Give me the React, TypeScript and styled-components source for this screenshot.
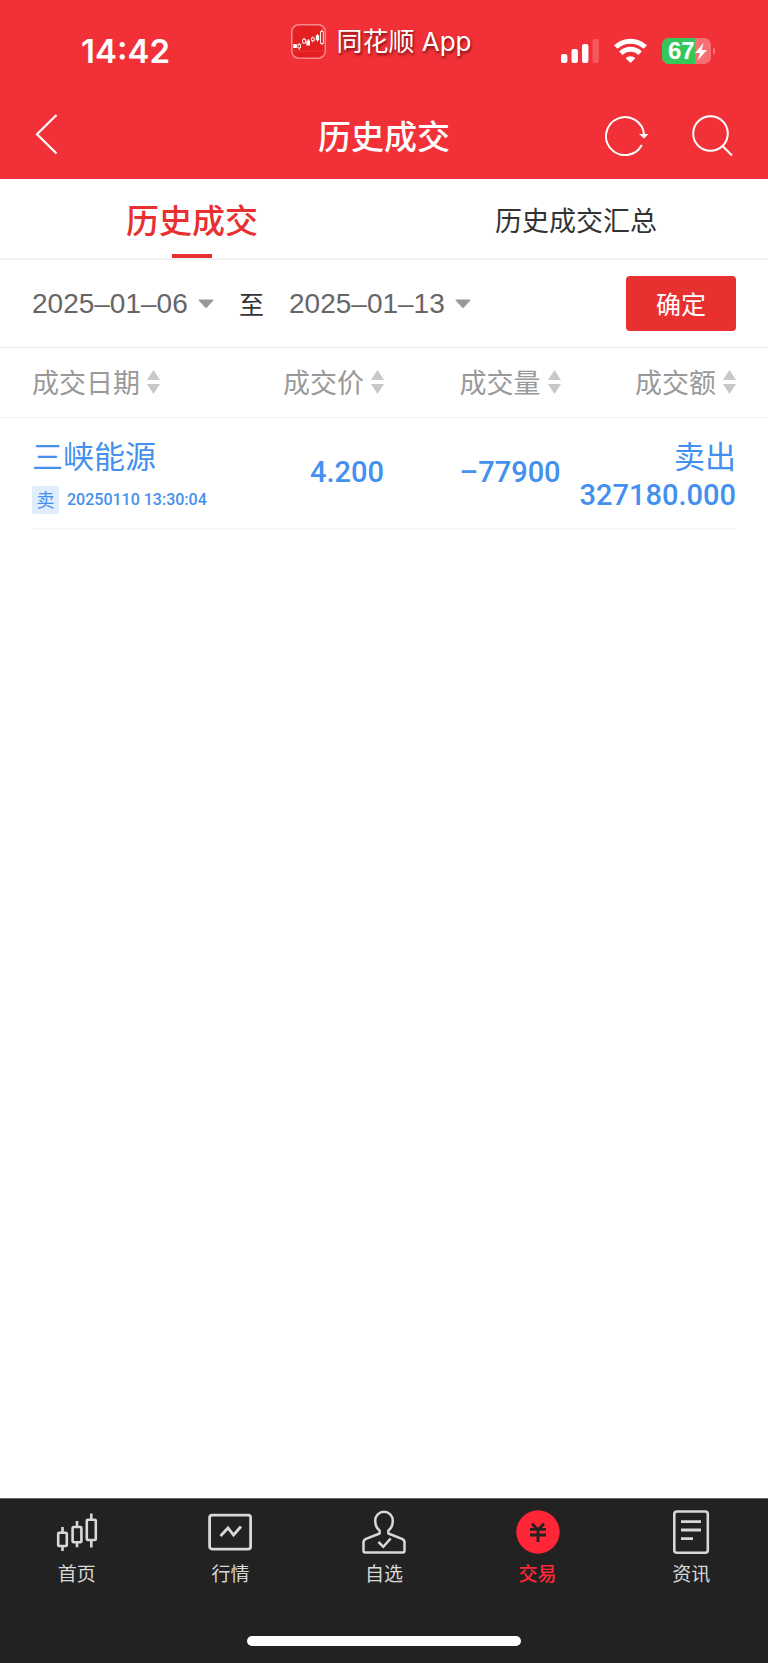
import React, { useState } from 'react';
import styled, { createGlobalStyle, css } from 'styled-components';

const cjk = `'Noto Sans CJK SC', sans-serif`;

const GlobalStyle = createGlobalStyle`
  *, *::before, *::after { box-sizing: border-box; }
  body { margin: 0; background: #fff; color: #333; font-family: ${cjk}; }
  button, select { font: inherit; color: inherit; background: none; border: 0; padding: 0; margin: 0; }
  button { cursor: pointer; }
  svg { display: block; flex: none; }
`;

const Page = styled.div`
  min-height: 100vh;
  display: flex;
  flex-direction: column;
`;

const Header = styled.header`
  background: #f23037;
  color: #fff;
`;

const StatusBar = styled.div`
  display: grid;
  grid-template-columns: 1fr auto 1fr;
  padding: 24px 0 25px;
  height: 93px;
`;

const Clock = styled.time`
  align-self: end;
  padding-left: 81px;
  font: 600 33px/34px Inter, sans-serif;
`;

const AppTag = styled.div`
  display: flex;
  align-items: center;
  gap: 10px;
  height: 35px;
  padding-right: 5px;
  font: 400 26px/35px Inter, ${cjk};
  text-shadow: 1px 2px 3px rgba(60, 0, 0, 0.7);
`;

const StatusIcons = styled.div`
  align-self: end;
  display: flex;
  align-items: center;
  justify-content: flex-end;
  height: 34px;
  gap: 15px;
  padding-right: 52px;
`;

const TitleBar = styled.div`
  display: grid;
  grid-template-columns: 1fr auto 1fr;
  align-items: center;
  height: 86px;
  padding: 0 35px;
`;

const Title = styled.h1`
  margin: 0;
  padding-bottom: 2px;
  font-size: 33px;
  line-height: 40px;
  font-weight: 500;
`;

const Actions = styled.div`
  display: flex;
  justify-content: flex-end;
  gap: 43px;
`;

const Tabs = styled.div`
  display: flex;
  height: 81px;
  border-bottom: 2px solid #f2f2f2;
`;

const Tab = styled.button<{ $active: boolean }>`
  flex: 1;
  display: flex;
  flex-direction: column;
  align-items: center;
  justify-content: space-between;
  font-size: 27px;
  line-height: 75px;
  padding-top: 3px;
  &::after {
    content: '';
    width: 40px;
    height: 4px;
    margin-top: -3px;
  }
  ${(p) =>
    p.$active &&
    css`
      font-size: 33px;
      font-weight: 500;
      color: #e93030;
      &::after { background: #e93030; }
    `}
`;

const Filter = styled.form`
  display: flex;
  align-items: center;
  height: 88px;
  padding: 0 32px;
  gap: 25px;
  border-bottom: 1px solid #eee;
  font-size: 25px;
  line-height: 36px;
`;

const DateField = styled.label`
  display: flex;
  align-items: center;
  gap: 10px;
  color: #666;
`;

const DateSelect = styled.select`
  appearance: none;
  font: 400 28px/36px 'Liberation Sans', sans-serif;
`;

const Confirm = styled.button`
  margin-left: auto;
  width: 110px;
  height: 55px;
  padding-bottom: 2px;
  border-radius: 4px;
  background: #e93030;
  color: #fff;
`;

const Until = styled.span`
  padding-bottom: 2px;
`;

const Trades = styled.table`
  width: 100%;
  table-layout: fixed;
  border-collapse: collapse;
  th:first-child, td:first-child { padding-left: 32px; text-align: left; }
  th:last-child, td:last-child { padding-right: 32px; }
`;

const HeadCell = styled.th<{ $width: string }>`
  width: ${(p) => p.$width};
  height: 69px;
  padding: 0;
  border-bottom: 1px solid #f0f0f0;
  text-align: right;
  font-weight: 400;
`;

const SortButton = styled.button`
  display: inline-flex;
  align-items: center;
  gap: 7px;
  font-size: 27px;
  line-height: 36px;
  color: #999;
  white-space: nowrap;
`;

const TradeRow = styled.tr`
  color: #4490ee;
  background: linear-gradient(#f7f7f7, #f7f7f7) no-repeat 32px bottom / calc(100% - 64px) 2px;
`;

const Cell = styled.td`
  padding: 18px 0 14px;
  vertical-align: top;
  text-align: right;
  font-size: 31px;
  line-height: 38px;
`;

const NumberCell = styled(Cell)`
  padding: 16px 0 20px;
  vertical-align: middle;
`;

const Amount = styled.div`
  font: 500 29px/42px Roboto, sans-serif;
`;

const Stamp = styled.div`
  display: flex;
  align-items: center;
  gap: 8px;
  margin-top: 12px;
  white-space: nowrap;
  font: 500 16px/28px Roboto, sans-serif;
`;

const SideBadge = styled.span`
  width: 27px;
  height: 28px;
  border-radius: 2px;
  background: #e0edfc;
  text-align: center;
  font: 400 18px/27px ${cjk};
`;

const Main = styled.main`
  flex: 1;
`;

const Footer = styled.footer`
  display: flex;
  flex-direction: column;
  align-items: center;
  justify-content: space-between;
  height: 165px;
  padding-bottom: 17px;
  background: #222;
  border-top: 1px solid #666;
`;

const NavBar = styled.nav`
  display: flex;
  width: 100%;
`;

const NavLink = styled.a<{ $active?: boolean }>`
  flex: 1;
  display: flex;
  flex-direction: column;
  align-items: center;
  gap: 5px;
  padding-top: 11px;
  font-size: 19px;
  line-height: 28px;
  text-decoration: none;
  color: ${(p) => (p.$active ? '#ff2637' : '#d8d8d8')};
  font-weight: ${(p) => (p.$active ? 500 : 400)};
`;

const HomeIndicator = styled.div`
  width: 274px;
  height: 10px;
  border-radius: 5px;
  background: #fff;
`;

const AppIcon = () => (
  <svg width="35" height="35" viewBox="0 0 35 35" fill="none">
    <rect x="0.8" y="0.8" width="33.4" height="33.4" rx="7" fill="#e31f22" stroke="#f8898b" strokeWidth="1.5" />
    <path d="M2 27h31M2 8h4" stroke="#ee4144" strokeWidth="0.7" />
    <path d="M2.2 20h3.6v4H2.2zM15.4 16.5h3.6v5h-3.6zM24.8 11.3h3.4v5h-3.4z" fill="#fff" />
    <path d="M17.2 15v2M26.5 10v7.5" stroke="#fff" />
    <path d="M6.9 20.5h2.6v3.4H6.9zM8.2 19v1.5M8.2 24v2M11.7 15.4h2.8v3.8h-2.8zM13.1 13.8v1.6M20.4 13.9h2.8v2.8h-2.8zM21.8 12.5v1.4M21.8 16.7v1.6M29.5 7.5h2.8v12h-2.8zM30.9 5.5v2M30.9 19.5v1.6" stroke="#fff" strokeWidth="0.9" />
  </svg>
);

const SignalIcon = () => (
  <svg width="38" height="26" viewBox="0 0 38 26" fill="#fff">
    <rect x="0" y="16" width="6.4" height="9" rx="2" />
    <rect x="10.5" y="11" width="6.4" height="14" rx="2" />
    <rect x="21" y="6" width="6.4" height="19" rx="2" />
    <rect x="31.5" y="1" width="6.4" height="24" rx="2" opacity="0.2" />
  </svg>
);

const WifiIcon = () => (
  <svg width="33" height="26" viewBox="0 0 33 26" fill="none" stroke="#fff" strokeWidth="5">
    <path d="M1.700 9.400A21.600 21.600 0 0 1 31.300 9.400" transform="translate(0 -.4)" />
    <path d="M6.900 15.200A13.800 13.800 0 0 1 26.100 15.200" />
    <path d="M16.500 25L11.600 20.200A7 7 0 0 1 21.400 20.200Z" fill="#fff" stroke="none" />
  </svg>
);

const BatteryIcon = () => (
  <svg width="54" height="28" viewBox="0 0 54 28">
    <rect x="0" y="1" width="49" height="26" rx="7" fill="#f76f73" />
    <path d="M7 1h26v26H7a7 7 0 0 1-7-7V8a7 7 0 0 1 7-7z" fill="#34c85a" />
    <path d="M51 10a4.4 4.4 0 0 1 0 8z" fill="#f76f73" />
    <text x="6" y="22" fontFamily="'Liberation Sans', sans-serif" fontWeight="700" fontSize="24" fill="#fff">67</text>
    <path d="M41.500 6L33 16h5l-2.500 7.500L45 13h-5.200z" fill="#fff" />
  </svg>
);

const BackIcon = () => (
  <svg width="23" height="40" viewBox="0 0 23 40" fill="none" stroke="#fff" strokeWidth="2.2">
    <path d="M21.5 1L2 20.2 21.5 39.5" />
  </svg>
);

const RefreshIcon = () => (
  <svg width="44" height="42" viewBox="0 0 44 42" fill="none" stroke="#fff" strokeWidth="2">
    <path d="M36.800 30A19 19 0 1 1 39 20" />
    <path d="M34 19h9.500L39 23.500z" fill="#fff" stroke="none" />
  </svg>
);

const SearchIcon = () => (
  <svg width="41" height="42" viewBox="0 0 41 42" fill="none" stroke="#fff" strokeWidth="2">
    <circle cx="18.5" cy="18.5" r="17.3" />
    <path d="M30.5 31L40 40.5" />
  </svg>
);

const CaretIcon = () => (
  <svg width="16" height="10" viewBox="0 0 16 10">
    <path d="M1.2 0.5h13.6q1.4 0 .3 1.2L8.9 8.6q-.9.8-1.8 0L.9 1.7Q-.2.5 1.2.5z" fill="#999" />
  </svg>
);

const SortIcon = () => (
  <svg width="13" height="24" viewBox="0 0 13 24" fill="#c8c8c8">
    <path d="M6.5 0L13 10H0z" />
    <path d="M6.5 24L13 14H0z" />
  </svg>
);

const CandlesIcon = () => (
  <svg width="44" height="44" viewBox="0 0 44 44" fill="none" stroke="#d8d8d8" strokeWidth="2.6">
    <rect x="3.2" y="22.8" width="8.6" height="13.2" rx="1" />
    <path d="M7.5 17v5.8M7.5 36v5" />
    <rect x="17.6" y="17" width="8.8" height="15.2" rx="1" />
    <path d="M22 11v6M22 32.2v5" />
    <rect x="31.8" y="9.8" width="9" height="20.2" rx="1" />
    <path d="M36.3 3.5v6.3M36.3 30v7.5" />
  </svg>
);

const MarketIcon = () => (
  <svg width="44" height="44" viewBox="0 0 44 44" fill="none" stroke="#d8d8d8" strokeWidth="2.8">
    <rect x="1.6" y="5.1" width="41" height="34" rx="2.5" />
    <path d="M12.500 26L20 18l5.500 7 7.500-8.500" />
  </svg>
);

const PersonIcon = () => (
  <svg width="44" height="44" viewBox="0 0 44 44" fill="none" stroke="#d8d8d8" strokeWidth="2.5" strokeLinejoin="round">
    <path d="M17.6 20.5C14 18 13.2 15 13.2 10.5a8.8 8.8 0 0 1 17.6 0c0 4.5-.8 7.5-4.4 10v3L40 28.9q2.5 1 2.5 3.3v8.6q0 1.7-1.7 1.7H3.2q-1.7 0-1.7-1.7v-8.600q0-2.300 2.500-3.300l13.600-5.400z" />
    <path d="M16.5 32l4.8 4.800 7.400-8.300" strokeLinejoin="miter" />
  </svg>
);

const YuanIcon = () => (
  <svg width="44" height="44" viewBox="0 0 44 44" fill="none">
    <circle cx="22" cy="22" r="21.7" fill="#ff2637" />
    <path d="M16 13.800l6 6 6-6M14 19.300h16M14 25h16M22 19v13" stroke="#222" strokeWidth="2.8" />
  </svg>
);

const NewsIcon = () => (
  <svg width="44" height="44" viewBox="0 0 44 44" fill="none" stroke="#d8d8d8" strokeWidth="2.6">
    <rect x="5.3" y="1.5" width="33.5" height="41.2" rx="2.5" />
    <path d="M12 11.600h20M12 20h20M12 28.600h12" strokeWidth="2.8" />
  </svg>
);

const tabs = ['历史成交', '历史成交汇总'];

const columns = [
  { label: '成交日期', width: '29%' },
  { label: '成交价', width: '21%' },
  { label: '成交量', width: '23%' },
  { label: '成交额', width: '27%' },
];

const trades = [
  { name: '三峡能源', side: '卖', time: '20250110 13:30:04', price: '4.200', volume: '–77900', action: '卖出', amount: '327180.000' },
];

const navItems = [
  { label: '首页', Icon: CandlesIcon },
  { label: '行情', Icon: MarketIcon },
  { label: '自选', Icon: PersonIcon },
  { label: '交易', Icon: YuanIcon, active: true },
  { label: '资讯', Icon: NewsIcon },
];

const DatePicker = ({ label, value }: { label: string; value: string }) => (
  <DateField>
    <DateSelect aria-label={label} defaultValue={value}>
      <option>{value}</option>
    </DateSelect>
    <CaretIcon />
  </DateField>
);

export default function App() {
  const [activeTab, setActiveTab] = useState(0);

  return (
    <Page>
      <GlobalStyle />
      <Header>
        <StatusBar>
          <Clock>14:42</Clock>
          <AppTag>
            <AppIcon />
            <span>同花顺 App</span>
          </AppTag>
          <StatusIcons>
            <SignalIcon />
            <WifiIcon />
            <BatteryIcon />
          </StatusIcons>
        </StatusBar>
        <TitleBar>
          <div>
            <button aria-label="返回"><BackIcon /></button>
          </div>
          <Title>历史成交</Title>
          <Actions>
            <button aria-label="刷新"><RefreshIcon /></button>
            <button aria-label="搜索"><SearchIcon /></button>
          </Actions>
        </TitleBar>
      </Header>

      <Tabs role="tablist">
        {tabs.map((name, i) => (
          <Tab key={name} role="tab" aria-selected={i === activeTab} $active={i === activeTab} onClick={() => setActiveTab(i)}>
            {name}
          </Tab>
        ))}
      </Tabs>

      <Filter onSubmit={(e) => e.preventDefault()}>
        <DatePicker label="开始日期" value="2025–01–06" />
        <Until>至</Until>
        <DatePicker label="结束日期" value="2025–01–13" />
        <Confirm type="submit">确定</Confirm>
      </Filter>

      <Main>
        <Trades>
          <thead>
            <tr>
              {columns.map((c) => (
                <HeadCell key={c.label} $width={c.width} scope="col">
                  <SortButton>
                    {c.label}
                    <SortIcon />
                  </SortButton>
                </HeadCell>
              ))}
            </tr>
          </thead>
          <tbody>
            {trades.map((t) => (
              <TradeRow key={t.time}>
                <Cell>
                  <div>{t.name}</div>
                  <Stamp>
                    <SideBadge>{t.side}</SideBadge>
                    {t.time}
                  </Stamp>
                </Cell>
                <NumberCell><Amount>{t.price}</Amount></NumberCell>
                <NumberCell><Amount>{t.volume}</Amount></NumberCell>
                <Cell>
                  <div>{t.action}</div>
                  <Amount>{t.amount}</Amount>
                </Cell>
              </TradeRow>
            ))}
          </tbody>
        </Trades>
      </Main>

      <Footer>
        <NavBar>
          {navItems.map(({ label, Icon, active }) => (
            <NavLink key={label} href="#" $active={active} aria-current={active ? 'page' : undefined}>
              <Icon />
              {label}
            </NavLink>
          ))}
        </NavBar>
        <HomeIndicator />
      </Footer>
    </Page>
  );
}
